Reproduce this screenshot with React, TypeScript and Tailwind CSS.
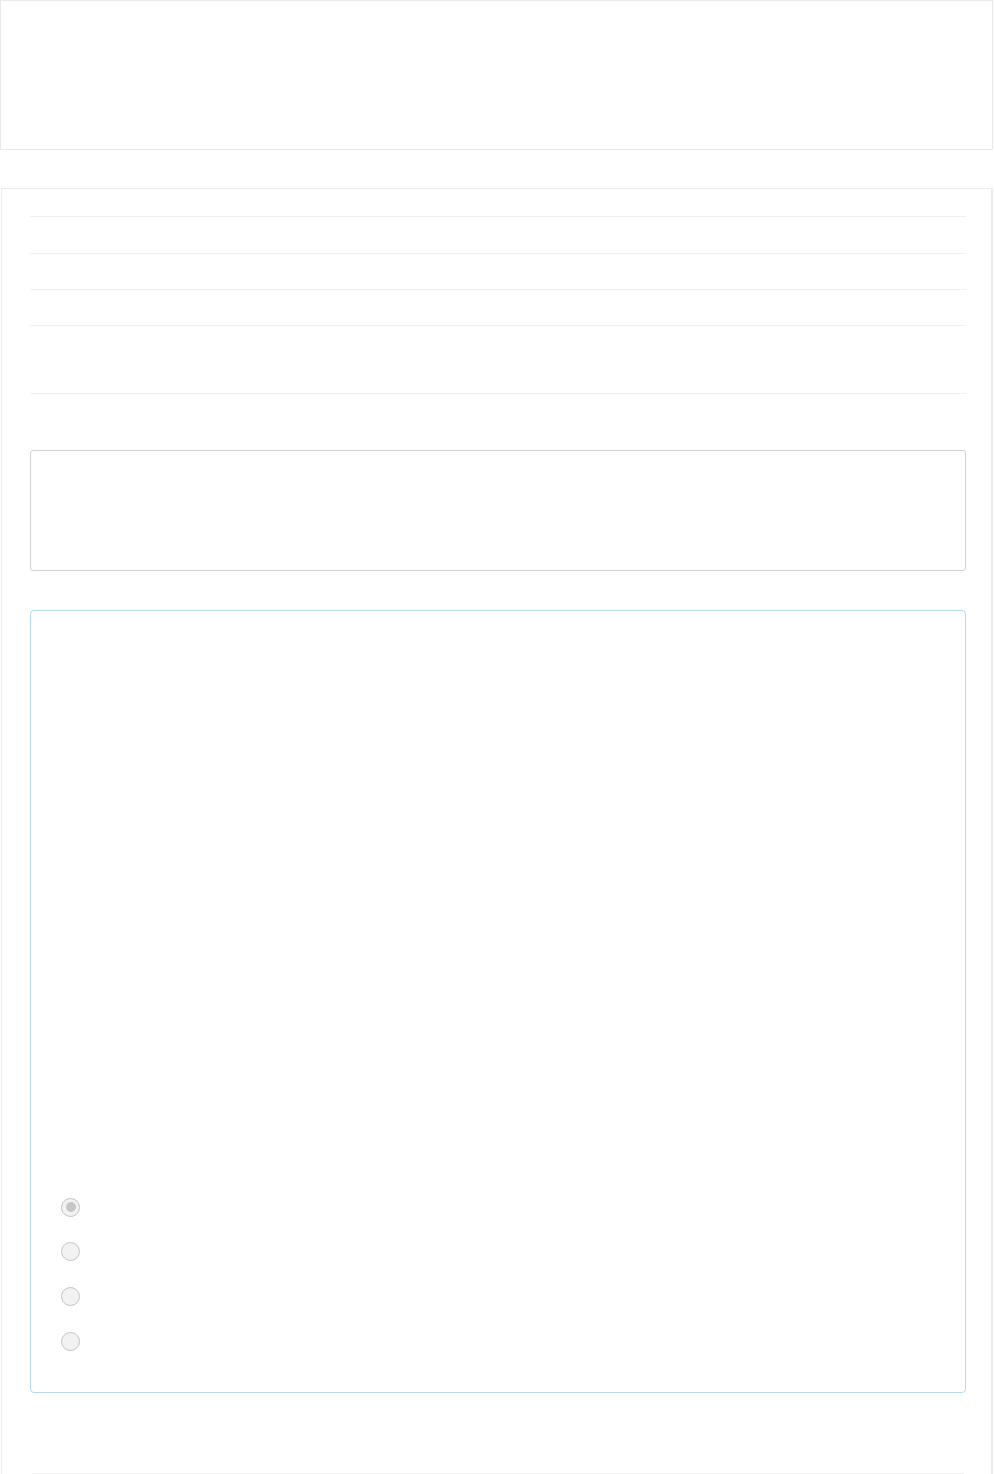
import React from 'react'

const Radio = ({ checked }: { checked?: boolean }) => (
    <div className="h-[44.6px] flex items-center">
        <span className="w-[19px] h-[19px] rounded-full border-[1.5px] border-[#c4c4c4] bg-[#f2f2f2] flex items-center justify-center">
            {checked && <span className="w-[10px] h-[10px] rounded-full bg-[#c6c6c6]" />}
        </span>
    </div>
)

const App = () => {
    return (
        <div className="w-[994px] min-h-[1474px] bg-white overflow-hidden" style={{ fontFamily: '"Liberation Sans", Arial, sans-serif' }}>
            <div className="w-[993px] h-[150px] border border-[#e9e9e9]" />
            <div className="mt-[38px] ml-[1px] w-[992px] border-t border-l border-r-2 border-[#ececec] pt-[27px] pl-[28px] pr-[25px] pb-[40px]">
                <div className="border-t-[1.5px] border-[#f0f0f0] h-[37px]" />
                <div className="border-t-[1.5px] border-[#f0f0f0] h-[36px]" />
                <div className="border-t-[1.5px] border-[#f0f0f0] h-[36px]" />
                <div className="border-t-[1.5px] border-[#f0f0f0] h-[68px]" />
                <div className="border-t border-[#f0f0f0] h-[57px]" />
                <div className="h-[121px] rounded-[3px] border-[1.5px] border-[#d0d0d0]" />
                <div className="mt-[39px] rounded-[4px] border-[1.5px] border-[#b3dcef] pt-[574px] pb-[29px] pl-[30px]">
                    <Radio checked />
                    <Radio />
                    <Radio />
                    <Radio />
                </div>
                <div className="mt-[80px] mx-[2px] border-t border-[#eeeeee]" />
            </div>
        </div>
    )
}

export default App
